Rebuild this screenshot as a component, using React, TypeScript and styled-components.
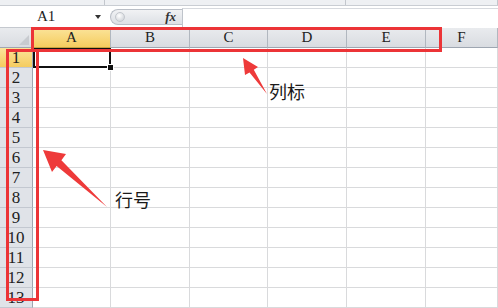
import { Fragment } from 'react';
import styled, { createGlobalStyle, css } from 'styled-components';

const GlobalStyle = createGlobalStyle`
  html, body {
    margin: 0;
    padding: 0;
    background: #ffffff;
    overflow: hidden;
  }
`;

const COLS = ['A', 'B', 'C', 'D', 'E', 'F'];
const COL_WIDTHS = [78, 79, 78, 79, 79, 72];
const ROWS = Array.from({ length: 13 }, (_, i) => i + 1);

const Page = styled.div`
  position: relative;
  width: 498px;
  height: 308px;
  overflow: hidden;
  font-family: 'Liberation Serif', 'Noto Sans CJK SC', serif;
  color: #222;
`;

const TopStrip = styled.div`
  display: flex;
  height: 5px;
  background: #eef0f3;
  border-bottom: 1px solid #c9cdd3;
`;

const StripSegment = styled.div<{ $w?: number }>`
  width: ${(p) => (p.$w ? `${p.$w}px` : 'auto')};
  flex: ${(p) => (p.$w ? 'none' : '1')};
  border-right: 1px solid #c3c7cd;
`;

const FormulaRow = styled.div`
  display: flex;
  align-items: center;
  height: 21px;
  background: #ffffff;
  border-bottom: 1px solid #c5c9cf;
`;

const NameBox = styled.div`
  position: relative;
  display: flex;
  align-items: center;
  width: 104px;
  height: 100%;
  padding-left: 37px;
  box-sizing: border-box;
  font-size: 15px;
`;

const DropArrow = styled.span`
  position: absolute;
  right: 3px;
  top: 9px;
  width: 0;
  height: 0;
  border-left: 3px solid transparent;
  border-right: 3px solid transparent;
  border-top: 4px solid #333;
`;

const FxPill = styled.div`
  display: flex;
  align-items: center;
  justify-content: space-between;
  margin-left: 6px;
  width: 72px;
  height: 16px;
  box-sizing: border-box;
  padding: 0 6px 0 4px;
  border: 1px solid #b9bec6;
  border-right: none;
  border-radius: 9px 0 0 9px;
  background: linear-gradient(#f1f2f4, #dde0e5);
`;

const PillDot = styled.span`
  width: 8px;
  height: 8px;
  border-radius: 50%;
  background: radial-gradient(circle at 40% 35%, #ffffff, #c7cbd1);
  border: 1px solid #c3c7cd;
`;

const FxLabel = styled.span`
  font-family: 'Liberation Serif', serif;
  font-style: italic;
  font-weight: bold;
  font-size: 13px;
  color: #333;
`;

const FormulaInput = styled.div`
  flex: 1;
  height: 19px;
  margin-top: 2px;
  border-left: 1px solid #bfc4cb;
  border-top: 1px solid #d6d9de;
  background: #ffffff;
`;

const Grid = styled.div`
  display: grid;
  grid-template-columns: 33px ${COL_WIDTHS.map((w) => `${w}px`).join(' ')};
  grid-auto-rows: 20px;
`;

const headerBase = css`
  display: flex;
  align-items: center;
  justify-content: center;
  box-sizing: border-box;
  background: linear-gradient(#e9ebee, #d9dce1);
`;

const Corner = styled.div`
  position: relative;
  ${headerBase};
  border-right: 1px solid #9ea6b1;
  border-bottom: 1px solid #9ea6b1;

  &::after {
    content: '';
    position: absolute;
    right: 3px;
    bottom: 2px;
    width: 0;
    height: 0;
    border-left: 10px solid transparent;
    border-bottom: 10px solid #c8cbd0;
  }
`;

const ColHeader = styled.div<{ $selected?: boolean }>`
  ${headerBase};
  font-size: 15px;
  border-right: 1px solid #b1b7bf;
  border-bottom: 1px solid #9ea6b1;
  ${(p) =>
    p.$selected &&
    css`
      background: linear-gradient(#fbe49a, #f5cc5f);
      border-bottom-color: #c9a240;
    `}
`;

const RowHeader = styled.div<{ $selected?: boolean }>`
  ${headerBase};
  font-size: 17px;
  background: #e0e3e8;
  border-right: 1px solid #9ea6b1;
  border-bottom: 1px solid #c3c8d0;
  ${(p) =>
    p.$selected &&
    css`
      background: linear-gradient(#fbe49a, #f5cc5f);
    `}
`;

const Cell = styled.div<{ $active?: boolean }>`
  position: relative;
  box-sizing: border-box;
  border-right: 1px solid #d9dadc;
  border-bottom: 1px solid #d9dadc;
  ${(p) =>
    p.$active &&
    css`
      border: none;
      box-shadow: inset 0 0 0 2px #111;

      &::after {
        content: '';
        position: absolute;
        right: -3px;
        bottom: -3px;
        width: 5px;
        height: 5px;
        background: #111;
        border: 1px solid #fff;
        z-index: 2;
      }
    `}
`;

const Frame = styled.div<{ $x: number; $y: number; $w: number; $h: number }>`
  position: absolute;
  left: ${(p) => p.$x}px;
  top: ${(p) => p.$y}px;
  width: ${(p) => p.$w}px;
  height: ${(p) => p.$h}px;
  box-sizing: border-box;
  border: 3px solid #ec3437;
  pointer-events: none;
`;

const Overlay = styled.svg`
  position: absolute;
  left: 0;
  top: 0;
  pointer-events: none;
`;

const Note = styled.div<{ $x: number; $y: number }>`
  position: absolute;
  left: ${(p) => p.$x}px;
  top: ${(p) => p.$y}px;
  font-family: 'Noto Sans CJK SC', 'Noto Sans', sans-serif;
  font-size: 18px;
  line-height: 20px;
  color: #1a1a1a;
`;

export default function App() {
  return (
    <Page>
      <GlobalStyle />
      <TopStrip>
        <StripSegment $w={104} />
        <StripSegment $w={240} />
        <StripSegment />
      </TopStrip>
      <FormulaRow>
        <NameBox>
          A1
          <DropArrow />
        </NameBox>
        <FxPill>
          <PillDot />
          <FxLabel>fx</FxLabel>
        </FxPill>
        <FormulaInput />
      </FormulaRow>

      <Grid>
        <Corner />
        {COLS.map((c) => (
          <ColHeader key={c} $selected={c === 'A'}>
            {c}
          </ColHeader>
        ))}
        {ROWS.map((r) => (
          <Fragment key={r}>
            <RowHeader $selected={r === 1}>{r}</RowHeader>
            {COLS.map((c) => (
              <Cell key={`${c}${r}`} $active={r === 1 && c === 'A'} />
            ))}
          </Fragment>
        ))}
      </Grid>

      <Frame $x={31} $y={27} $w={411} $h={25} />
      <Frame $x={6} $y={49} $w={33} $h={252} />

      <Overlay width="498" height="308" viewBox="0 0 498 308">
        <polygon
          points="243,58 245,75 249.5,72.5 267,94 253.8,69.8 258,67"
          fill="#ee3a3a"
        />
        <polygon
          points="43,150 52,172 56.6,166 107,207 61.4,160.2 66,154"
          fill="#ee3a3a"
        />
      </Overlay>

      <Note $x={269} $y={81}>列标</Note>
      <Note $x={115} $y={189}>行号</Note>
    </Page>
  );
}
